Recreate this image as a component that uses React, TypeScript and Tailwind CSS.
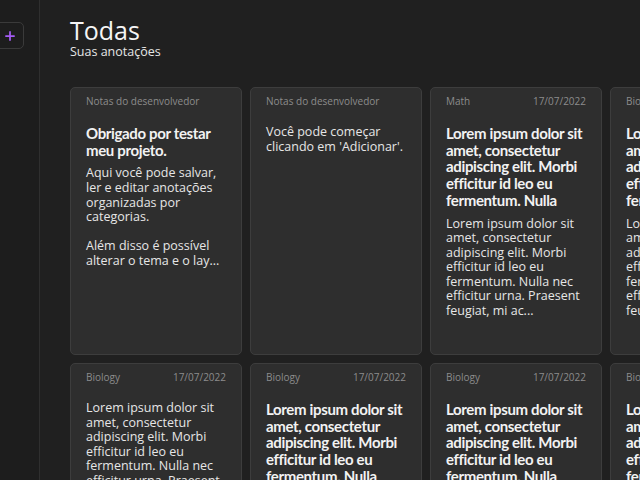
import { Plus } from "lucide-react";

type Note = {
  category: string;
  date?: string;
  title?: string;
  body: string;
};

// texts are cut by characters in the app, so the "..." is part of the string
const LOREM_TITLE =
  "Lorem ipsum dolor sit amet, consectetur adipiscing elit. Morbi efficitur id leo eu fermentum. Nulla";
const LOREM_BODY =
  "Lorem ipsum dolor sit amet, consectetur adipiscing elit. Morbi efficitur id leo eu fermentum. Nulla nec efficitur urna. Praesent feugiat, mi ac...";

const notes: Note[] = [
  {
    category: "Notas do desenvolvedor",
    title: "Obrigado por testar meu projeto.",
    body: "Aqui você pode salvar, ler e editar anotações organizadas por categorias.\n\nAlém disso é possível alterar o tema e o lay...",
  },
  {
    category: "Notas do desenvolvedor",
    body: "Você pode começar clicando em 'Adicionar'.",
  },
  { category: "Math", date: "17/07/2022", title: LOREM_TITLE, body: LOREM_BODY },
  { category: "Biology", date: "17/07/2022", title: LOREM_TITLE, body: LOREM_BODY },
  { category: "Biology", date: "17/07/2022", body: LOREM_BODY },
  { category: "Biology", date: "17/07/2022", title: LOREM_TITLE, body: LOREM_BODY },
  { category: "Biology", date: "17/07/2022", title: LOREM_TITLE, body: LOREM_BODY },
  { category: "Biology", date: "17/07/2022", title: LOREM_TITLE, body: LOREM_BODY },
];

const NoteCard = ({ note }: { note: Note }) => {
  return (
    <div className="h-[268px] rounded-[5px] border border-[#3d3d3d] bg-[#2e2e2e] px-[15px] pt-[6px] overflow-hidden">
      <div className="flex justify-between text-[10px] leading-[14px] text-[#8c8c8c]">
        <span className="whitespace-nowrap">{note.category}</span>
        {note.date && <span>{note.date}</span>}
      </div>
      <div className="pt-[17px]">
        {note.title && (
          <h2
            className="mb-[8px] text-[15px] leading-[16.7px] font-bold text-[#f2f2f2] tracking-[-0.35px]"
            style={{ fontFamily: "Lato, 'Open Sans', sans-serif" }}
          >
            {note.title}
          </h2>
        )}
        <p className="text-[12.5px] leading-[14.6px] text-[#e6e6e6] whitespace-pre-line">
          {note.body}
        </p>
      </div>
    </div>
  );
};

const App = () => {
  return (
    <div
      className="flex h-[480px] w-[640px] overflow-hidden bg-[#202020] text-white"
      style={{ fontFamily: "'Open Sans', 'Noto Sans', sans-serif" }}
    >
      {/* Sidebar */}
      <aside className="w-[40px] shrink-0 border-r border-[#2f2f2f] bg-[#1d1d1d] pt-[22px]">
        <button className="-ml-[10px] flex h-[27px] w-[34px] items-center justify-end rounded-[5px] border border-[#3a3a3a] pr-[6px] text-[#a55cf5]">
          <Plus size={14} strokeWidth={3} />
        </button>
      </aside>

      {/* Main */}
      <main className="flex-1 pl-[30px] pt-[16px]">
        <div className="flex items-start justify-between">
          <div>
            <h1 className="text-[25px] leading-[28px] font-medium text-[#f5f5f5]">Todas</h1>
            <p className="text-[12.5px] leading-[15px] text-[#e6e6e6]">Suas anotações</p>
          </div>
          <input
            className="mt-[6px] -mr-[10px] h-[27px] w-[105px] rounded-[5px] border border-[#3a3a3a] bg-[#222222] outline-none"
            aria-label="Pesquisar"
          />
        </div>

        <div className="mt-[28px] grid grid-cols-[repeat(4,172px)] gap-[8px]">
          {notes.map((note, i) => (
            <NoteCard key={i} note={note} />
          ))}
        </div>
      </main>
    </div>
  );
};

export default App;
